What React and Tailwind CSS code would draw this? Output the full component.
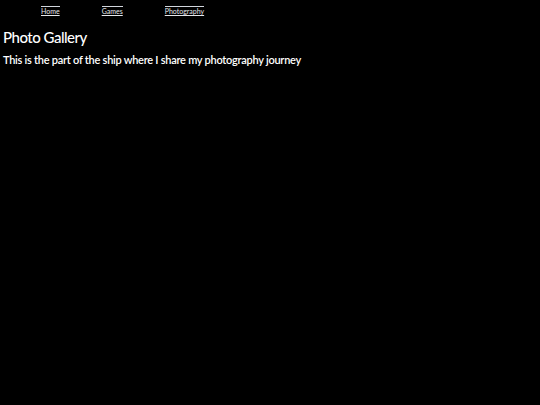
import React from "react";

export default function App() {
  const links = ["Home", "Games", "Photography"];
  return (
    <div className="min-h-[405px] bg-black text-white" style={{ fontFamily: 'Lato, "Noto Sans", sans-serif' }}>
      <nav className="flex gap-[42px] pl-[41px] pt-[6px]">
        {links.map((l) => (
          <a key={l} href="#" className="border-t border-gray-300 text-[7px] leading-[9px] underline text-gray-200">
            {l}
          </a>
        ))}
      </nav>
      <h1 className="mt-[11px] pl-[3px] text-[15px] leading-[20px] font-medium tracking-[-0.5px]">Photo Gallery</h1>
      <p className="mt-[6px] pl-[3px] text-[11px] leading-[14px] font-semibold tracking-[-0.26px]">
        This is the part of the ship where I share my photography journey
      </p>
    </div>
  );
}
